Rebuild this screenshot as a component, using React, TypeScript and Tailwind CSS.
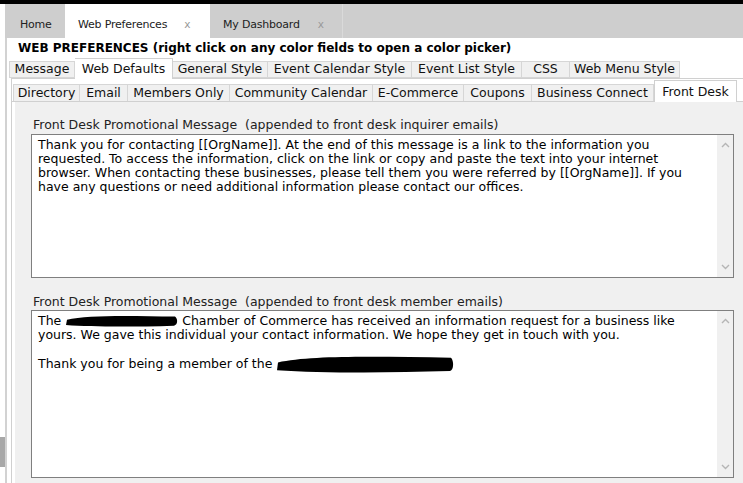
import React from "react"

const font = { fontFamily: '"DejaVu Sans", Verdana, sans-serif' }

const Chevron = ({ up }: { up?: boolean }) => (
  <svg width="9" height="6" viewBox="0 0 9 6" className="block">
    <path
      d={up ? "M1 5 L4.5 1.5 L8 5" : "M1 1 L4.5 4.5 L8 1"}
      fill="none"
      stroke="#b5b5b5"
      strokeWidth="1.4"
    />
  </svg>
)

// redaction scribble
const Blob = ({ w, h }: { w: number; h: number }) => (
  <svg width={w} height={h} viewBox={`0 0 ${w} ${h}`} className="inline-block align-middle -mt-[2px]">
    <path
      d={`M2 ${h * 0.45} C ${w * 0.2} ${h * 0.05}, ${w * 0.6} ${h * 0.15}, ${w - 3} ${h * 0.2} C ${w} ${h * 0.35}, ${w} ${h * 0.85}, ${w - 4} ${h * 0.9} C ${w * 0.6} ${h}, ${w * 0.25} ${h}, 1 ${h * 0.85} Z`}
      fill="#000"
    />
  </svg>
)

const TextBox = ({ lines, h }: { lines: React.ReactNode[]; h: string }) => (
  <div className={`flex ${h} border border-[#7f7f7f] bg-white`}>
    <div className="flex-1 pl-[6px] pt-[3px] text-[12.5px] leading-[14px] text-black">
      {lines.map((l, i) => (
        <div key={i} className="h-[14px] whitespace-pre">
          {l}
        </div>
      ))}
    </div>
    <div className="w-[16px] bg-[#f0f0f0] flex flex-col items-center justify-between py-[7px]">
      <Chevron up />
      <Chevron />
    </div>
  </div>
)

const row1 = ["Message", "Web Defaults", "General Style", "Event Calendar Style", "Event List Style", "CSS", "Web Menu Style"]
const row1w = [66, 98, 95, 144, 110, 48, 110]
const row2 = ["Directory", "Email", "Members Only", "Community Calendar", "E-Commerce", "Coupons", "Business Connect", "Front Desk"]
const row2w = [67, 48, 102, 143, 91, 68, 122, 83]

export default function App() {
  return (
    <div className="w-[743px] h-[483px] overflow-hidden bg-white flex flex-col" style={font}>
      <div className="h-[4px] bg-black" />
      <div className="flex flex-1 min-h-0">
        <div className="w-[5px] bg-white flex flex-col pt-[433px]">
          <div className="h-[30px] bg-[#a8a8a8]" />
        </div>
        <div className="flex-1 flex flex-col min-w-0">
          <div className="h-[34px] bg-[#cecece] flex text-[11px] tracking-[-0.2px] text-[#222]">
            <div className="w-[60px] pt-[13px] pl-[15px]">Home</div>
            <div className="w-[145px] bg-white pt-[13px] pl-[13px] flex items-start">
              <span>Web Preferences</span>
              <span className="ml-[17px] text-[#999] text-[10.5px]">x</span>
            </div>
            <div className="w-[133px] pt-[13px] pl-[13px] flex items-start border-r border-[#dadada]">
              <span>My Dashboard</span>
              <span className="ml-[18px] text-[#999] text-[10.5px]">x</span>
            </div>
          </div>
          <div className="flex-1 flex flex-col border-l-2 border-[#d2d2d2] min-h-0">
            <div className="pl-[11px] pt-[2px] h-[19px] text-[12px] font-bold text-black leading-[16px]">
              WEB PREFERENCES (right click on any color fields to open a color picker)
            </div>
            <div className="flex items-end h-[21px] pl-[2px] text-[12.5px] text-[#111]">
              {row1.map((t, i) =>
                i === 1 ? (
                  <div
                    key={t}
                    style={{ width: row1w[i] }}
                    className="h-[21px] -mb-[1px] bg-white border-t border-r border-[#d0d0d0] flex items-start pt-[1px] justify-center relative z-10"
                  >
                    {t}
                  </div>
                ) : (
                  <div
                    key={t}
                    style={{ width: row1w[i] }}
                    className="h-[17px] bg-[#f0f0f0] border-y border-r first:border-l border-[#d6d6d6] flex items-center justify-center"
                  >
                    {t}
                  </div>
                )
              )}
            </div>
            <div className="ml-[4px] flex-1 flex flex-col border-l border-t border-[#d0d0d0] min-h-0">
              <div className="flex items-end h-[22px] pl-[1px] text-[12.5px] text-[#111]">
                {row2.map((t, i) =>
                  i === 7 ? (
                    <div
                      key={t}
                      style={{ width: row2w[i] }}
                      className="h-[22px] -mb-[1px] bg-white border border-b-0 border-[#d0d0d0] flex items-start pt-[2px] justify-center relative z-10"
                    >
                      {t}
                    </div>
                  ) : (
                    <div
                      key={t}
                      style={{ width: row2w[i] }}
                      className="h-[17px] bg-[#f0f0f0] border-t border-r first:border-l border-[#d6d6d6] flex items-center justify-center"
                    >
                      {t}
                    </div>
                  )
                )}
              </div>
              <div className="flex-1 border-t border-[#d0d0d0] bg-white pl-[3px] min-h-0">
                <div className="h-full bg-[#f0f0f0] pl-[16px] pr-[9px] pt-[15px]">
                  <div className="ml-[2px] h-[17px] text-[12.5px] text-[#222] leading-[15px]">
                    Front Desk Promotional Message&nbsp;&nbsp;(appended to front desk inquirer emails)
                  </div>
                  <TextBox
                    h="h-[144px]"
                    lines={[
                      "Thank you for contacting [[OrgName]]. At the end of this message is a link to the information you",
                      "requested. To access the information, click on the link or copy and paste the text into your internet",
                      "browser. When contacting these businesses, please tell them you were referred by [[OrgName]]. If you",
                      "have any questions or need additional information please contact our offices.",
                    ]}
                  />
                  <div className="ml-[2px] mt-[16px] h-[16px] text-[12.5px] text-[#222] leading-[15px]">
                    Front Desk Promotional Message&nbsp;&nbsp;(appended to front desk member emails)
                  </div>
                  <TextBox
                    h="h-[168px]"
                    lines={[
                      <span key="a">
                        The <Blob w={113} h={13} /> Chamber of Commerce has received an information request for a business like
                      </span>,
                      "yours. We gave this individual your contact information. We hope they get in touch with you.",
                      "",
                      <span key="b">
                        Thank you for being a member of the <Blob w={178} h={19} />
                      </span>,
                    ]}
                  />
                </div>
              </div>
            </div>
          </div>
        </div>
      </div>
    </div>
  )
}
